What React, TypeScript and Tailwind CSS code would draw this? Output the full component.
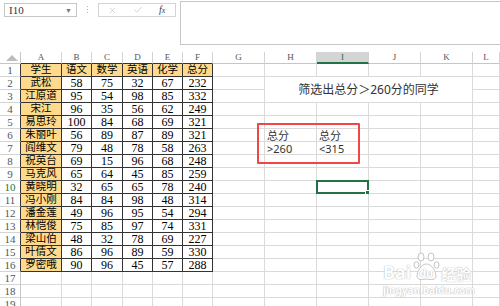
import { X, Check } from "lucide-react";

const cols = ["A", "B", "C", "D", "E", "F", "G", "H", "I", "J", "K", "L"];

const table = [
  ["学生", "语文", "数学", "英语", "化学", "总分"],
  ["武松", "58", "75", "32", "67", "232"],
  ["江原道", "95", "54", "98", "85", "332"],
  ["宋江", "96", "35", "56", "62", "249"],
  ["易思玲", "100", "84", "68", "69", "321"],
  ["朱丽叶", "56", "89", "87", "89", "321"],
  ["阎维文", "79", "48", "78", "58", "263"],
  ["祝英台", "69", "15", "96", "68", "248"],
  ["马克风", "65", "64", "45", "85", "259"],
  ["黄晓明", "32", "65", "65", "78", "240"],
  ["冯小刚", "84", "84", "98", "48", "314"],
  ["潘金莲", "49", "96", "95", "54", "294"],
  ["林恺俊", "75", "85", "97", "74", "331"],
  ["梁山伯", "48", "32", "78", "69", "227"],
  ["叶倩文", "86", "96", "89", "59", "330"],
  ["罗密哦", "90", "96", "45", "57", "288"],
];

const notes: Record<string, string> = {
  "6-7": "总分",
  "6-8": "总分",
  "7-7": ">260",
  "7-8": "<315",
};

const serif = "font-['Liberation_Serif','Noto_Sans_CJK_SC',serif]";
const sans = "font-['Noto_Sans','Noto_Sans_CJK_SC',sans-serif]";

function TopBar() {
  return (
    <div className="flex h-[52px] bg-white">
      <div className="flex w-[180px] shrink-0 items-start pt-[3px]">
        <div className="ml-[4px] flex h-[14px] w-[73px] items-center justify-between border border-[#c6c6c6] pl-[4px] pr-[4px]">
          <span className={`${serif} text-[11px] leading-none text-[#333]`}>I10</span>
          <span className="text-[7px] leading-none text-[#777]">▼</span>
        </div>
        <div className="ml-[10px] mt-[3px] flex flex-col gap-[2px]">
          <div className="h-[1px] w-[1px] bg-[#b5b5b5]" />
          <div className="h-[1px] w-[1px] bg-[#b5b5b5]" />
          <div className="h-[1px] w-[1px] bg-[#b5b5b5]" />
        </div>
        <div className="ml-[10px] flex h-[14px] w-[78px] items-center border border-[#d4d4d4] pl-[9px]">
          <X size={9} strokeWidth={1.5} className="text-[#b8b8b8]" />
          <Check size={10} strokeWidth={1.5} className="ml-[16px] text-[#b8b8b8]" />
          <span className={`${serif} ml-[16px] text-[10px] italic leading-none text-[#444]`}>
            f<span className="text-[8px]">x</span>
          </span>
        </div>
      </div>
      <div className="mt-[1px] h-[44px] flex-1 border border-r-0 border-[#c6c6c6] bg-white" />
    </div>
  );
}

function Sheet() {
  const cells: React.ReactNode[] = [];

  // header row
  cells.push(
    <div key="corner" className="relative h-[12px] border-r border-b border-[#c6c6c6]">
      <div className="absolute right-[2px] bottom-[2px] h-0 w-0 border-l-[6px] border-t-[6px] border-l-transparent border-t-transparent border-b-0 border-r-[6px] border-r-transparent [border-bottom:6px_solid_#bdbdbd]" />
    </div>
  );
  cols.forEach((c, i) => {
    const sel = c === "I";
    const tbl = i <= 5;
    cells.push(
      <div
        key={"h" + c}
        className={`flex h-[12px] items-center justify-center border-r border-[#d4d4d4] ${serif} text-[9px] leading-none ${
          sel
            ? "border-b-2 border-b-[#217346] bg-[#d4d4d4] text-[#217346]"
            : tbl
            ? "border-b border-b-[#333] text-[#555]"
            : "border-b border-b-[#c6c6c6] text-[#555]"
        }`}
      >
        {c}
      </div>
    );
  });

  for (let r = 1; r <= 19; r++) {
    const inRows = r <= 16;
    cells.push(
      <div
        key={"r" + r}
        className={`flex h-[13px] items-center justify-center border-b border-[#d4d4d4] ${serif} text-[11px] leading-none ${
          inRows ? "border-r border-r-[#333]" : "border-r border-r-[#c6c6c6]"
        } ${r === 10 ? "text-[#217346]" : "text-[#555]"}`}
      >
        {r}
      </div>
    );
    cols.forEach((c, ci) => {
      if (r === 3 && ci >= 7 && ci <= 10) return;
      if (r === 2 && ci === 7) {
        cells.push(
          <div
            key="merged"
            className={`col-span-4 row-span-2 flex h-[26px] items-center justify-center border-r border-b border-[#dadada] ${sans} text-[12px] leading-none text-[#333]`}
          >
            筛选出总分＞260分的同学
          </div>
        );
        return;
      }
      if (r === 2 && ci > 7 && ci <= 10) return;
      const inTable = inRows && ci <= 5;
      const yellow = inTable && (r === 1 || ci === 0);
      const value = inTable ? table[r - 1][ci] : notes[`${r}-${ci}`];
      const note = !inTable && value;
      cells.push(
        <div
          key={r + c}
          className={`relative flex h-[13px] items-center overflow-hidden whitespace-nowrap leading-none ${
            inTable ? "border-r border-b border-[#333]" : "border-r border-b border-[#dadada]"
          } ${yellow ? "bg-[#ffda8c]" : "bg-white"} ${
            note
              ? `${sans} justify-start pl-[2px] text-[11px] text-[#333]`
              : `${serif} justify-center text-black ${ci === 0 || r === 1 ? "text-[10.5px]" : "text-[12px]"}`
          } ${r === 10 && c === "I" ? "overflow-visible" : ""}`}
        >
          {value}
          {r === 10 && c === "I" && (
            <div className="absolute -left-[1px] -top-[1px] h-[14px] w-[53px] border-2 border-[#217346]">
              <div className="absolute -right-[3px] -bottom-[3px] h-[5px] w-[5px] border border-white bg-[#217346]" />
            </div>
          )}
        </div>
      );
    });
  }

  return (
    <div className="relative h-[254px] overflow-hidden">
      <div className="grid grid-cols-[21px_41px_30px_31px_30px_30px_30px_52px_52px_52px_52px_52px_1fr]">
        {cells}
      </div>
      <div className="pointer-events-none absolute left-[257px] top-[71px] h-[41px] w-[103px] rounded-[1px] border-2 border-[#f04646]" />
      <Watermark />
    </div>
  );
}

function Watermark() {
  const outline = "[text-shadow:0_0_1px_#b8b8b8,0_0_1px_#b8b8b8]";
  return (
    <div className="pointer-events-none absolute left-[383px] top-[200px] flex flex-col items-start">
      <div className="flex items-end">
        <span className={`${sans} text-[18px] font-bold leading-none text-white ${outline}`}>Bai</span>
        <div className="relative ml-[2px] h-[29px] w-[27px]">
          <svg width="27" height="29" viewBox="0 0 27 29" fill="white" stroke="#c4c4c4" strokeWidth="1">
            <ellipse cx="8" cy="5" rx="3" ry="4" />
            <ellipse cx="18" cy="5" rx="3" ry="4" />
            <ellipse cx="3.5" cy="13" rx="2.5" ry="3.2" />
            <ellipse cx="23.5" cy="13" rx="2.5" ry="3.2" />
            <path d="M13.5 12 C8 12 4 20 4 24 C4 28 9 28 13.5 27 C18 28 23 28 23 24 C23 20 19 12 13.5 12 Z" />
          </svg>
          <span className={`absolute left-[6px] top-[15px] ${sans} text-[11px] font-bold leading-none text-white ${outline}`}>du</span>
        </div>
        <span className={`ml-[1px] font-['Noto_Sans_CJK_SC',sans-serif] text-[15px] font-bold leading-none text-white ${outline}`}>经验</span>
      </div>
      <span className={`mt-[4px] ${sans} text-[10px] font-bold leading-none text-white ${outline}`}>jingyan.baidu.com</span>
    </div>
  );
}

export default function App() {
  return (
    <div className="h-[306px] w-[500px] overflow-hidden bg-white">
      <TopBar />
      <Sheet />
    </div>
  );
}
